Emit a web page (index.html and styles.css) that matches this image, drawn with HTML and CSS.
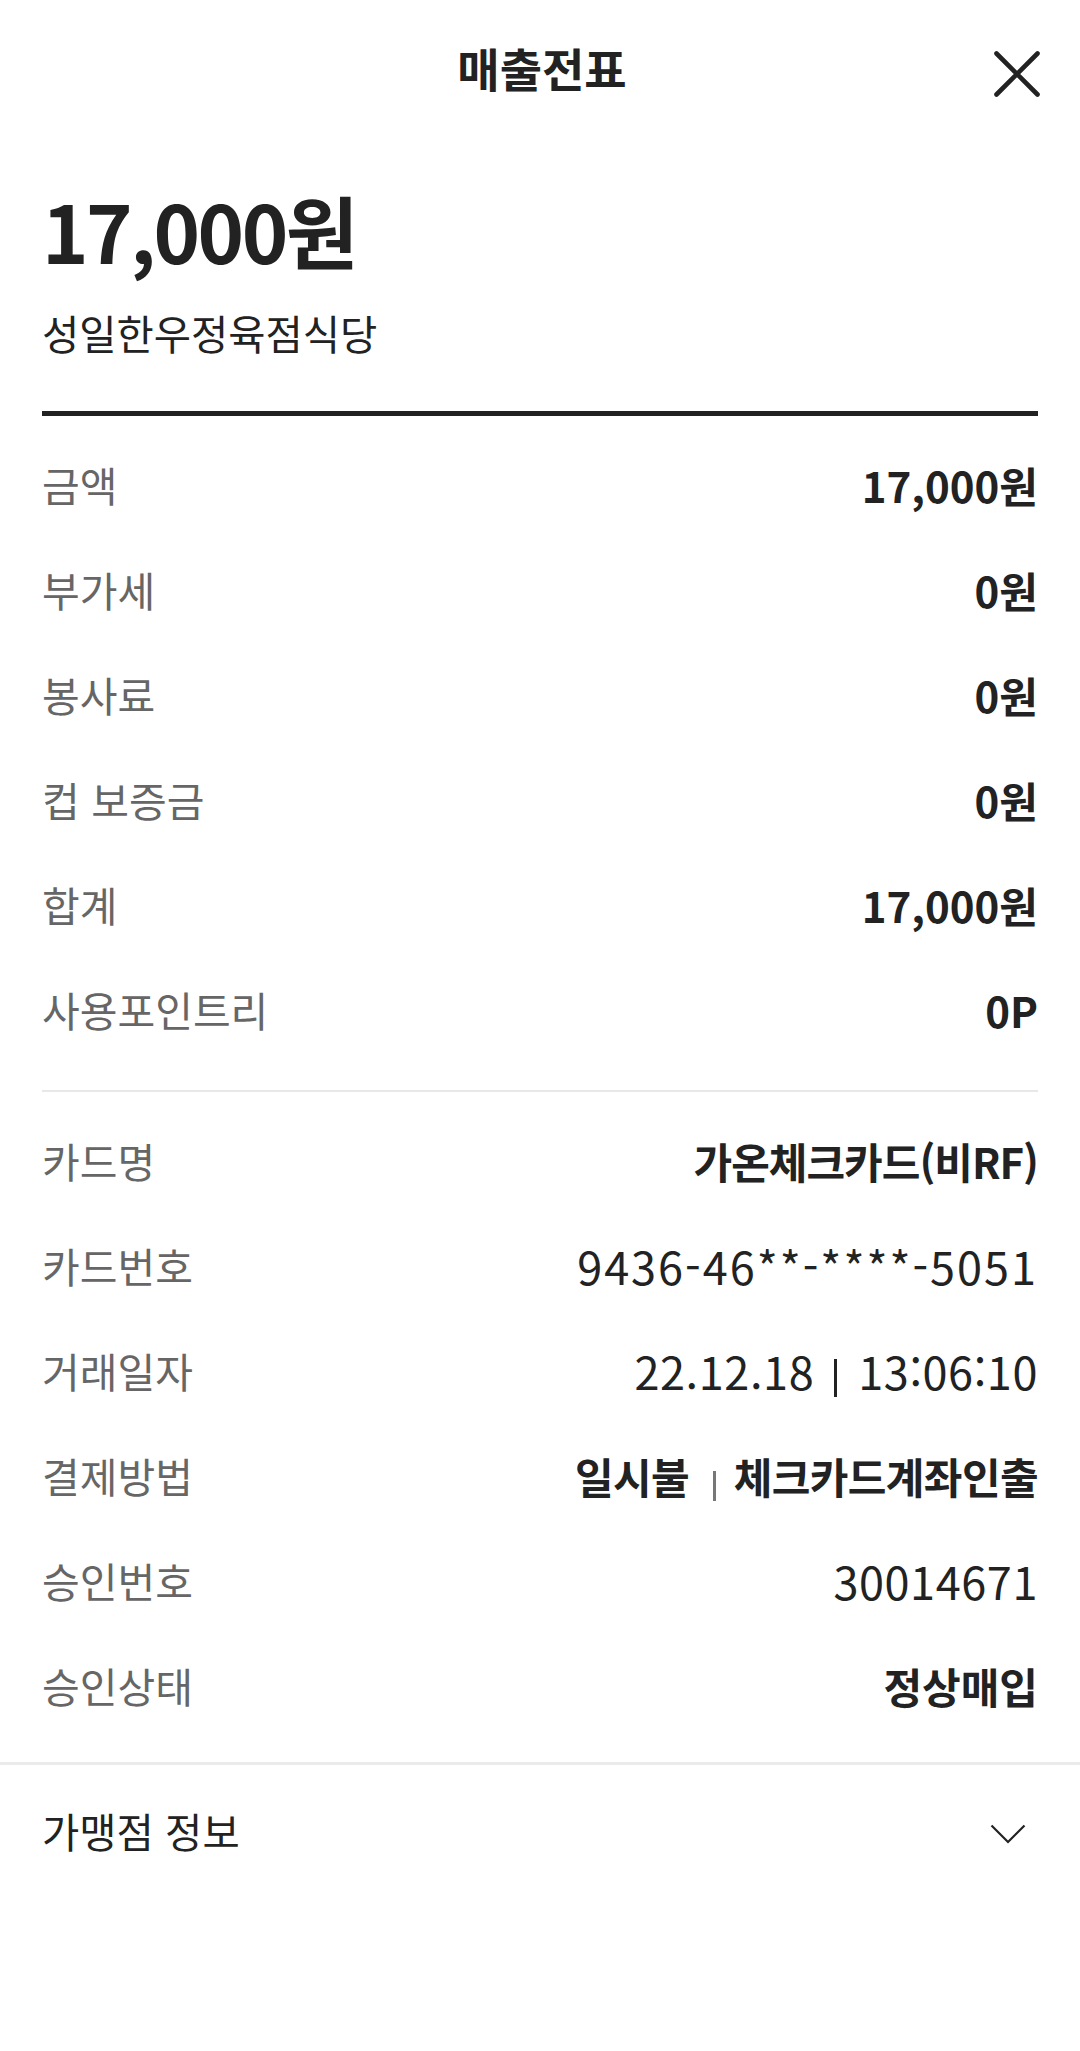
FILE: index.html
```html
<!DOCTYPE html>
<html lang="ko">
<head>
<meta charset="utf-8">
<title>매출전표</title>
<link rel="stylesheet" href="styles.css">
</head>
<body>
<div class="page">
  <header class="header">
    <h1 class="title">매출전표</h1>
    <button class="close" aria-label="닫기">
      <svg width="48" height="48" viewBox="0 0 48 48"><path d="M3.5 3.5 L44.5 44.5 M44.5 3.5 L3.5 44.5" stroke="#222" stroke-width="4.6" stroke-linecap="round" fill="none"/></svg>
    </button>
  </header>

  <section class="summary">
    <div class="amount">17,000원</div>
    <div class="store">성일한우정육점식당</div>
  </section>

  <div class="content">
    <div class="group group-first">
      <div class="row"><span class="label">금액</span><span class="value bold">17,000원</span></div>
      <div class="row"><span class="label">부가세</span><span class="value bold">0원</span></div>
      <div class="row"><span class="label">봉사료</span><span class="value bold">0원</span></div>
      <div class="row"><span class="label">컵 보증금</span><span class="value bold">0원</span></div>
      <div class="row"><span class="label">합계</span><span class="value bold">17,000원</span></div>
      <div class="row"><span class="label">사용포인트리</span><span class="value bold">0P</span></div>
    </div>
    <div class="group group-second">
      <div class="row"><span class="label">카드명</span><span class="value bold card-name">가온체크카드(비RF)</span></div>
      <div class="row"><span class="label">카드번호</span><span class="value num card-no">9436-46**-****-5051</span></div>
      <div class="row"><span class="label">거래일자</span><span class="value num">22.12.18<span class="sep-dark"></span>13:06:10</span></div>
      <div class="row"><span class="label">결제방법</span><span class="value bold ko">일시불<span class="sep-light"></span>체크카드계좌인출</span></div>
      <div class="row"><span class="label">승인번호</span><span class="value num">30014671</span></div>
      <div class="row"><span class="label">승인상태</span><span class="value bold">정상매입</span></div>
    </div>
  </div>

  <div class="accordion">
    <span class="acc-title">가맹점 정보</span>
    <svg class="chevron" width="36" height="20" viewBox="0 0 36 20"><path d="M1.5 1.5 L18 18 L34.5 1.5" stroke="#222" stroke-width="2.2" fill="none" stroke-linejoin="miter"/></svg>
  </div>
</div>
</body>
</html>
```

FILE: styles.css
```css
html, body {
  margin: 0;
  padding: 0;
  background: #fff;
}
body {
  font-family: "Noto Sans CJK KR", "Noto Sans", sans-serif;
  color: #222;
}
.page {
  width: 1080px;
}
.header {
  position: relative;
  height: 147px;
  display: flex;
  align-items: center;
  justify-content: center;
}
.title {
  margin: 0 0 14px;
  font-size: 46px;
  font-weight: 700;
  line-height: 1;
  color: #222;
  padding-left: 4px;
}
.close {
  position: absolute;
  right: 39px;
  top: 50px;
  width: 48px;
  height: 48px;
  padding: 0;
  border: 0;
  background: none;
  display: block;
}
.close svg {
  display: block;
}
.summary {
  padding: 43px 42px 0;
}
.amount {
  font-size: 79px;
  font-weight: 700;
  line-height: 1;
  letter-spacing: -2.5px;
}
.store {
  margin-top: 44px;
  font-size: 40.5px;
  line-height: 1;
  color: #222;
}
.content {
  margin: 57px 42px 0;
  border-top: 5px solid #222;
}
.group {
  padding: 16px 0 28px;
}
.group-second {
  padding-bottom: 24px;
}
.group-first {
  border-bottom: 2px solid #e8e8e8;
}
.row {
  height: 105px;
  display: flex;
  align-items: center;
  justify-content: space-between;
}
.label {
  font-size: 41px;
  color: #666;
}
.value {
  font-size: 42px;
  color: #222;
  font-weight: 400;
}
.value.bold {
  font-weight: 700;
}
.value.card-name {
  letter-spacing: -1px;
}
.value.ko {
  letter-spacing: -0.6px;
}
.value.num {
  font-size: 45px;
  letter-spacing: 0.6px;
}
.value.card-no {
  letter-spacing: 2px;
}
.sep-dark {
  display: inline-block;
  width: 3px;
  height: 38px;
  background: #222;
  margin: 0 21px 0 20px;
  vertical-align: -7px;
}
.sep-light {
  display: inline-block;
  width: 2.6px;
  height: 30px;
  background: #777;
  margin: 0 18px 0 24px;
  vertical-align: -7px;
}
.accordion {
  border-top: 3px solid #ebebeb;
  height: 131px;
  padding: 0 54px 0 42px;
  display: flex;
  align-items: center;
  justify-content: space-between;
}
.acc-title {
  font-size: 40.5px;
  color: #222;
}
.chevron {
  display: block;
  margin-top: 8px;
}
```
